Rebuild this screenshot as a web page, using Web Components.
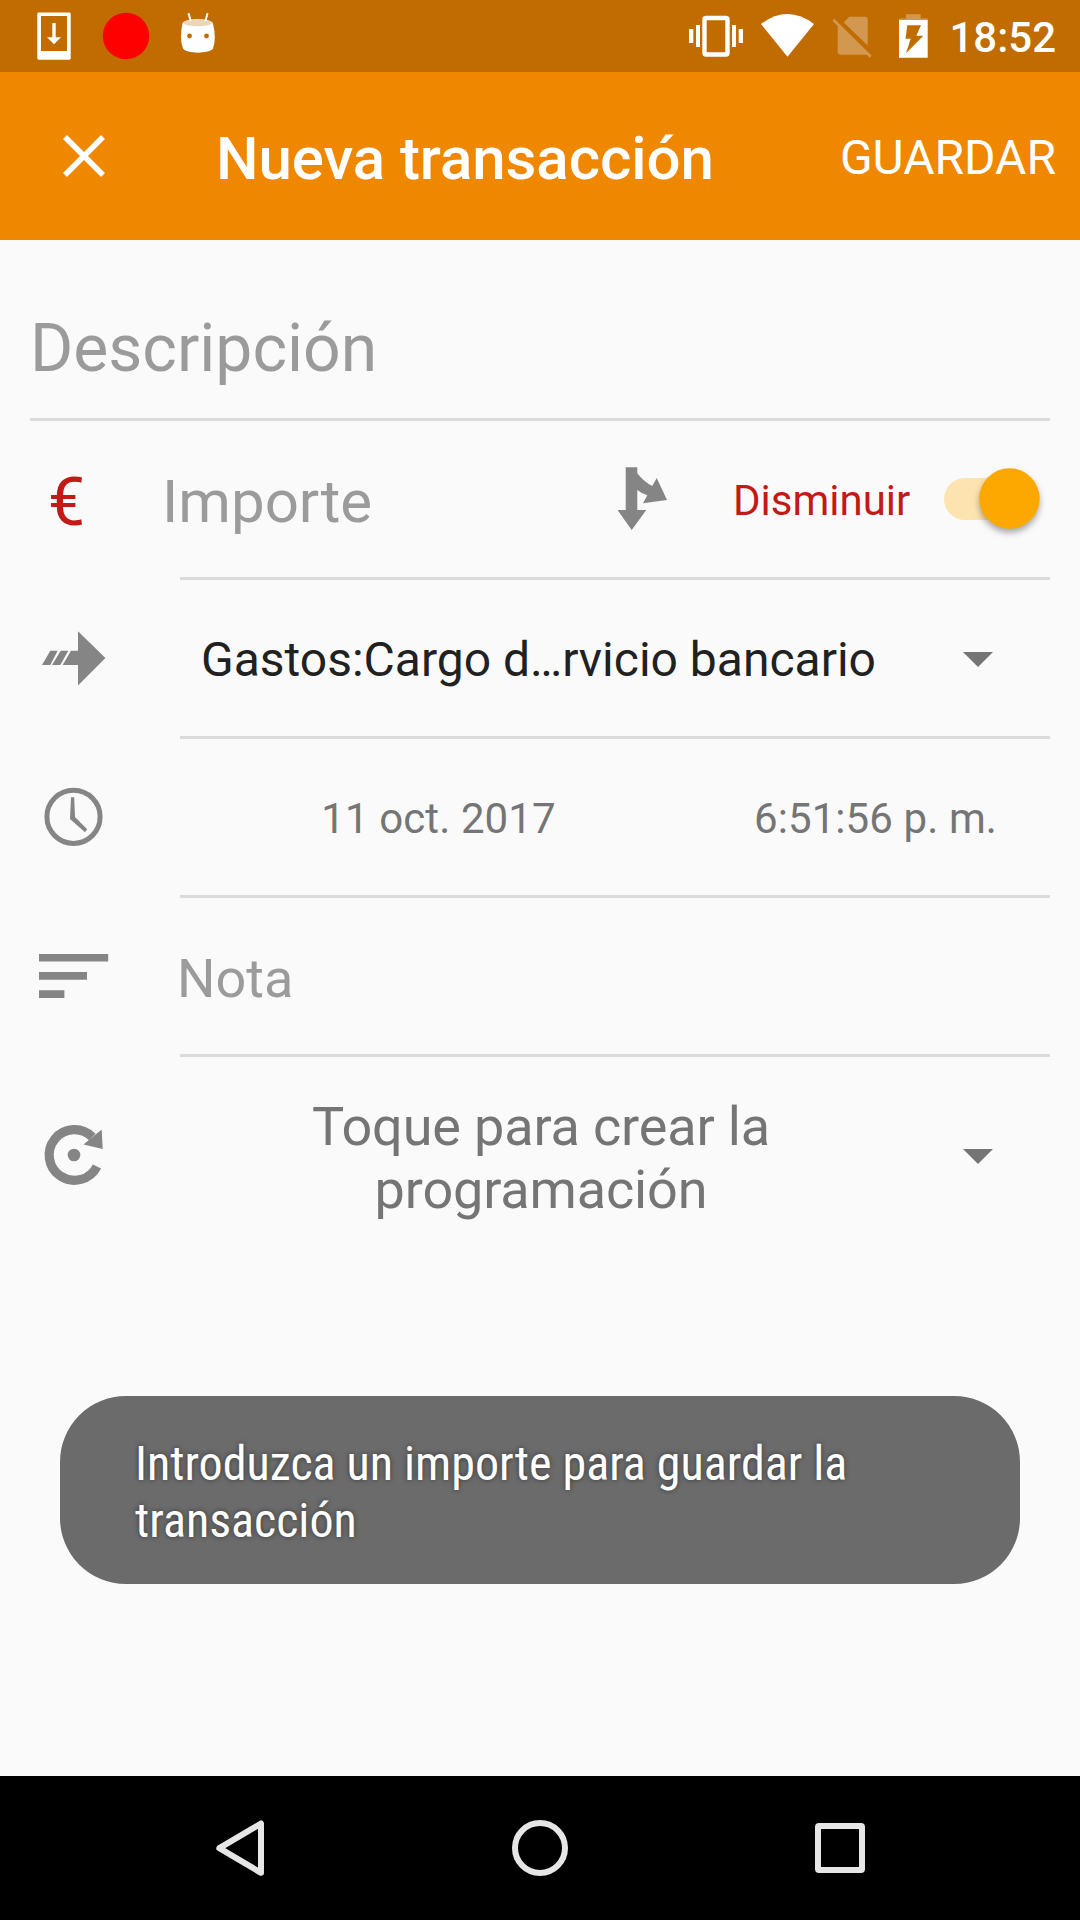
<!DOCTYPE html>
<html lang="es">
<head>
<meta charset="utf-8">
<title>Nueva transacción</title>
<style>
html,body{margin:0;padding:0}
body{width:1080px;height:1920px;overflow:hidden;font-family:Roboto,"Noto Sans",sans-serif;background:#fafafa}
</style>
</head>
<body>
<transaction-screen></transaction-screen>
<script>
const define = (name, html) => customElements.define(name, class extends HTMLElement {
  constructor() {
    super();
    this.attachShadow({mode: 'open'}).innerHTML = html;
  }
});

define('status-bar', `
<style>
:host{display:flex;height:72px;background:#c06c00;color:#fff;justify-content:space-between}
div{display:flex}
svg{display:block;height:72px;flex:none}
time{font:500 42px/72px Roboto,sans-serif;padding:2px 0 0;height:70px;white-space:nowrap;margin-left:-1px}
.r{padding-right:24px}
</style>
<div>
<svg width="90" viewBox="0 0 90 72" fill="#fff"><path fill-rule="evenodd" d="M38.3 12.5H69.7L70.7 13.5V58.7L69.7 59.7H38.3L37.3 58.7V13.5ZM41 16V51H67V16Z"/><path d="M52.3 23h3.4v14.3H61L54 44.3 47 37.3h5.3Z"/></svg>
<svg width="80" viewBox="90 0 80 72"><circle cx="126" cy="36" r="23.2" fill="#f00"/></svg>
<svg width="60" viewBox="170 0 60 72"><path d="M182.5 23C187 18 209 18 212.8 23Q214.8 30 214.8 37Q214.8 44 213 48.500C210 54 186 54 183 48.500Q181 44 181 37Q181 30 182.500 23Z" fill="#fff"/><ellipse cx="197.700" cy="22.700" rx="14.300" ry="3.500" fill="#ecd6ba"/><path d="M188.500 13.200L190.700 21M207.500 13.200L205.500 21" stroke="#fff" stroke-width="2"/><circle cx="189.500" cy="36" r="2.400" fill="#c06c00"/><circle cx="206.500" cy="36" r="2.400" fill="#c06c00"/></svg>
</div>
<div class="r">
<svg width="70" viewBox="680 0 70 72" fill="#fff"><rect x="704.500" y="18" width="23" height="36.500" rx="1.500" fill="none" stroke="#fff" stroke-width="4.400"/><path d="M696 25h4v22h-4ZM689 29h4.300v14H689ZM732 25h4v22h-4ZM738.700 29h4.300v14h-4.300Z"/></svg>
<svg width="75" viewBox="750 0 75 72"><path d="M761 24Q787.500 4 814 24L787.500 56.800Z" fill="#fff"/></svg>
<svg width="65" viewBox="825 0 65 72" fill="#d2984f"><path d="M843.700 22.500L849.300 16.700H865Q867.700 16.700 867.700 19.500V45.500Z"/><path d="M834.300 18.700L871.700 55.700L869.800 57.700L866.700 54.800H841Q837.700 54.800 837.700 52V26L832.300 20.700Z"/></svg>
<svg width="60" viewBox="890 0 60 72"><path d="M899 20V18.500H906V14.300H920.700V18.500H927.700V20Z" fill="#d2984f"/><path fill="#fff" fill-rule="evenodd" d="M899 20H927.700V57.800H899ZM907.300 25.300L905.500 38.700H910.700L906 53.300L923.300 35.700H916.300L921 25.300Z"/></svg>
<time>18:52</time>
</div>`);

define('app-bar', `
<style>
:host{display:flex;align-items:center;height:168px;background:#ef8700;color:#fff;box-sizing:border-box;padding:0 24px 0 60px}
svg{flex:none;width:48px;height:48px}
.t{font:500 60px/80px Roboto,sans-serif;letter-spacing:-.06px;margin-left:108px;padding-top:5px;flex:1;white-space:nowrap}
.a{font:400 48px/60px Roboto,sans-serif;padding-top:3px;white-space:nowrap}
</style>
<svg viewBox="0 0 48 48"><path d="M5 5L43 43M43 5L5 43" stroke="#fff" stroke-width="5.600"/></svg>
<div class="t"><slot name="title"></slot></div><div class="a"><slot name="action"></slot></div>`);

define('form-row', `
<style>
:host{display:flex;box-sizing:border-box;height:159px;padding:0 30px;--line:#dbdbdb}
.i{flex:none;width:150px;display:flex;align-items:center}
.c{flex:1;min-width:0;display:flex;align-items:center;border-bottom:3px solid var(--line)}
.i{border-bottom:3px solid transparent}
:host([full]) .i{display:none}
:host([full]){height:181px}
:host([last]){height:199px}
:host([last]) .c{border-color:transparent}
</style>
<div class="i"><slot name="icon"></slot></div><div class="c"><slot></slot></div>`);

const icons = {
  transfer: '<path d="M12 52L20.300 37.700H27.700L20.300 52ZM22 52L30.700 37.700H38.300L30.300 52ZM32.700 52L41 37.700H48V18.200L75.400 45L48 72.500V52Z"/>',
  clock: '<circle cx="43.500" cy="44.800" r="26.600" fill="none" stroke="#858585" stroke-width="5"/><path d="M41 25.300H44.200L45 45L57.200 57.200L55 60.200L40 47Z"/>',
  note: '<path d="M9 23H78.200V30.600H9ZM9 41H57V48.700H9ZM9 59.200H34.400V67H9Z"/>',
  recur: '<path d="M67 56.500A25.300 25.300 0 1 1 62.300 27" fill="none" stroke="#858585" stroke-width="9.200"/><path d="M71.700 19.500L72.700 39L53.500 34.500Z"/><circle cx="44" cy="45" r="6.300"/>'
};
customElements.define('row-icon', class extends HTMLElement {
  connectedCallback() {
    this.attachShadow({mode: 'open'}).innerHTML = `<style>:host{display:block;width:90px;height:90px}svg{display:block}</style>
<svg width="90" height="90" viewBox="0 0 90 90" fill="#858585">${icons[this.getAttribute('name')]}</svg>`;
  }
});

define('split-icon', `
<style>:host{display:block;flex:none;width:60px;height:70px}svg{display:block}</style>
<svg width="60" height="70" viewBox="0 0 60 70" fill="#858585"><path d="M13.700 3.300H25.300V9.300Q32 18 40.300 22L44.700 14L55 36L31 39.300L35.300 31.300Q29 29 25.300 26V46H34.300L19.700 66L5.500 46H13.700Z"/></svg>`);

define('type-switch', `
<style>:host{display:block;flex:none;width:110px;height:80px}svg{display:block;overflow:visible}circle{filter:drop-shadow(0 4px 3px rgba(0,0,0,.33))}</style>
<svg width="110" height="80" viewBox="0 0 110 80"><rect x="4" y="19" width="90" height="42" rx="21" fill="#fde3b0"/><circle cx="69.500" cy="39.500" r="30.200" fill="#fca800"/></svg>`);

define('drop-caret', `
<style>:host{display:block;flex:none;width:30px;height:15px;padding-top:2px}svg{display:block}</style>
<svg width="30" height="15" viewBox="0 0 30 15"><path d="M0 0H30L15 15Z" fill="#757575"/></svg>`);

define('toast-message', `
<style>
:host{display:block;position:absolute;left:60px;top:1396px;width:960px;height:188px;box-sizing:border-box;border-radius:66px;background:#6b6b6b;color:#fff;padding:39px 75px 0}
.x{font:400 48px/57px "Roboto Condensed",Roboto,sans-serif;font-stretch:75%;text-shadow:0 0 5px rgba(0,0,0,.5);white-space:nowrap}
</style>
<div class="x"><slot></slot></div>`);

define('nav-bar', `
<style>:host{display:flex;height:144px;background:#000;box-sizing:border-box;padding:0 90px}
div{flex:1;display:flex;align-items:center;justify-content:center}svg{display:block}</style>
<div><svg width="64" height="64" viewBox="0 0 64 64" fill="none" stroke="#e6e6e6" stroke-width="6" stroke-linejoin="round"><path d="M53 7.500V56.800L11.300 32.200Z"/></svg></div>
<div><svg width="64" height="64" viewBox="0 0 64 64" fill="none" stroke="#e6e6e6" stroke-width="6"><circle cx="32" cy="32" r="25"/></svg></div>
<div><svg width="64" height="64" viewBox="0 0 64 64" fill="none" stroke="#e6e6e6" stroke-width="6"><rect x="10" y="10" width="44" height="44" rx="1"/></svg></div>`);

define('transaction-screen', `
<style>
:host{display:flex;flex-direction:column;position:relative;width:1080px;height:1920px;background:#fafafa}
main{flex:1;display:flex;flex-direction:column}
span{white-space:nowrap;display:block}
.desc{font-size:66px;line-height:80px;color:#9b9b9b;padding-top:40px}
.cur{font-size:66px;line-height:80px;color:#c11a17;margin-left:18px;padding-top:8px}
.amount{font-size:60px;line-height:80px;color:#9b9b9b;margin-left:-18px;padding-top:5px;width:450px}
.kind{font-size:42px;line-height:60px;color:#c11a17;padding-top:3px;margin-left:61px;width:207px}
.acct{font-size:48px;line-height:60px;color:#212121;margin-left:21px;padding-top:4px;width:762px}
.date,.time{flex:none;font-size:42px;line-height:60px;color:#757575;padding-top:3px;text-align:center;letter-spacing:.1px}
.date{width:517px}
.time{width:357px}
.note{font-size:54px;line-height:70px;color:#9b9b9b;padding-top:5px;margin-left:-3px}
.rec{font-size:54px;line-height:63px;letter-spacing:-.15px;color:#757575;padding-top:6px;text-align:center;width:722px;margin-right:61px}
</style>
<status-bar></status-bar>
<app-bar><span slot="title">Nueva transacción</span><span slot="action">GUARDAR</span></app-bar>
<main>
<form-row full><span class="desc">Descripción</span></form-row>
<form-row><span class="cur" slot="icon">€</span><span class="amount">Importe</span><split-icon></split-icon><span class="kind">Disminuir</span><type-switch></type-switch></form-row>
<form-row><row-icon slot="icon" name="transfer"></row-icon><span class="acct">Gastos:Cargo d…rvicio bancario</span><drop-caret></drop-caret></form-row>
<form-row><row-icon slot="icon" name="clock"></row-icon><span class="date">11 oct. 2017</span><span class="time">6:51:56 p. m.</span></form-row>
<form-row><row-icon slot="icon" name="note"></row-icon><span class="note">Nota</span></form-row>
<form-row last><row-icon slot="icon" name="recur"></row-icon><span class="rec">Toque para crear la<br>programación</span><drop-caret></drop-caret></form-row>
</main>
<nav-bar></nav-bar>
<toast-message>Introduzca un importe para guardar la<br>transacción</toast-message>`);
</script>
</body>
</html>
